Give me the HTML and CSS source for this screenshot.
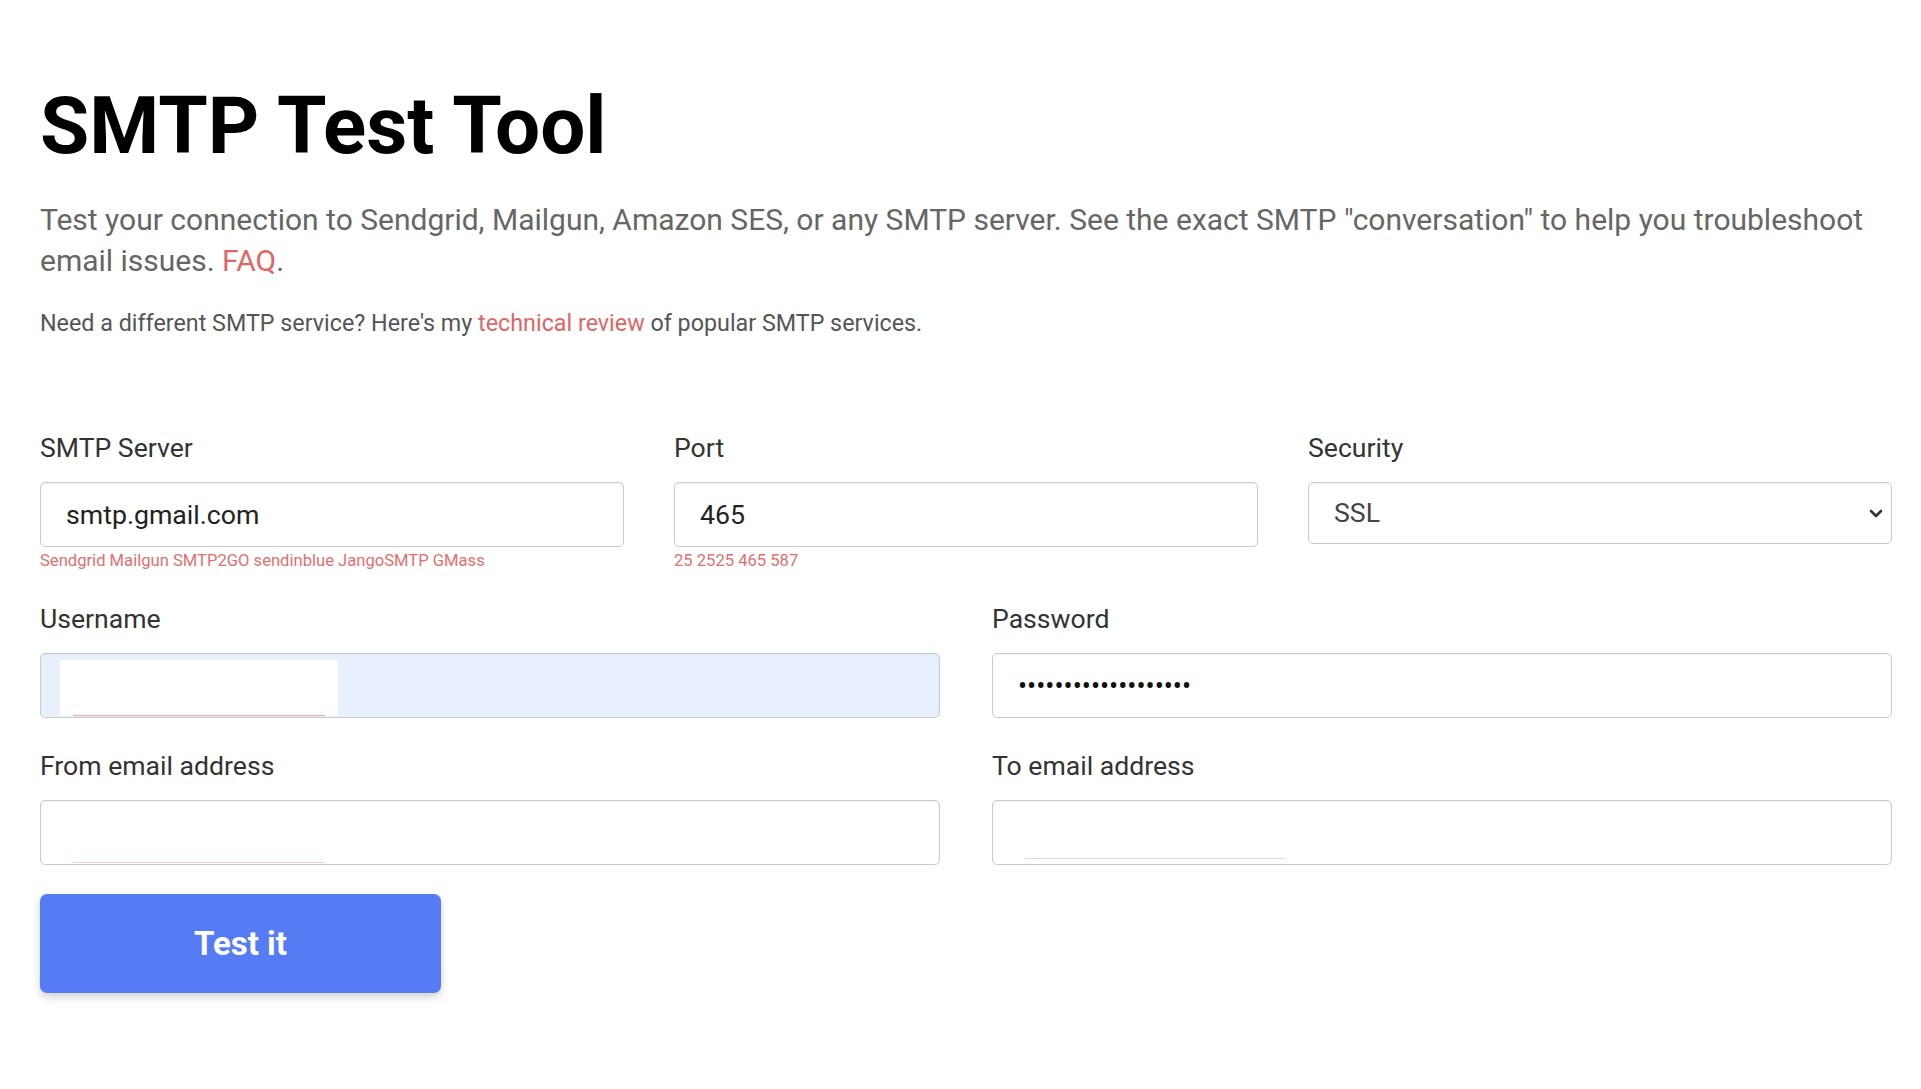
FILE: index.html
```html
<!DOCTYPE html>
<html lang="en">
<head>
<meta charset="utf-8">
<title>SMTP Test Tool</title>
<link rel="stylesheet" href="styles.css">
</head>
<body>
<main class="page">
  <h1 class="title">SMTP Test Tool</h1>
  <p class="lead">Test your connection to Sendgrid, Mailgun, Amazon SES, or any SMTP server. See the exact SMTP "conversation" to help you troubleshoot email issues. <a href="#" class="link">FAQ</a>.</p>
  <p class="note">Need a different SMTP service? Here's my <a href="#" class="link">technical review</a> of popular SMTP services.</p>

  <form class="form">
    <div class="row row-3">
      <div class="field">
        <label class="label">SMTP Server</label>
        <div class="control"><input class="input" type="text" value="smtp.gmail.com"></div>
        <div class="hint">Sendgrid Mailgun SMTP2GO sendinblue JangoSMTP GMass</div>
      </div>
      <div class="field">
        <label class="label">Port</label>
        <div class="control"><input class="input" type="text" value="465"></div>
        <div class="hint">25 2525 465 587</div>
      </div>
      <div class="field">
        <label class="label">Security</label>
        <div class="control">
          <select class="select"><option>SSL</option><option>TLS</option><option>None</option></select>
          <svg class="chevron" width="14" height="9" viewBox="0 0 14 9" aria-hidden="true"><path d="M2 2l5 5 5-5" fill="none" stroke="#333" stroke-width="2.6" stroke-linecap="round" stroke-linejoin="round"/></svg>
        </div>
      </div>
    </div>

    <div class="row row-2">
      <div class="field">
        <label class="label">Username</label>
        <div class="control">
          <input class="input input-autofill" type="text" value="">
          <span class="mask"></span>
          <span class="redact redact-user"></span>
        </div>
      </div>
      <div class="field">
        <label class="label">Password</label>
        <div class="control"><input class="input input-pass" type="password" value="abcdefghijklmnopqrs"></div>
      </div>
    </div>

    <div class="row row-2">
      <div class="field">
        <label class="label">From email address</label>
        <div class="control">
          <input class="input" type="text" value="">
          <span class="redact redact-from"></span>
        </div>
      </div>
      <div class="field">
        <label class="label">To email address</label>
        <div class="control">
          <input class="input" type="text" value="">
          <span class="redact redact-to"></span>
        </div>
      </div>
    </div>

    <button type="button" class="btn">Test it</button>
  </form>
</main>
</body>
</html>
```

FILE: styles.css
```css
html, body {
  margin: 0;
  padding: 0;
  background: #fff;
}

body {
  font-family: Roboto, "Liberation Sans", Arial, sans-serif;
  color: #333;
}

.page {
  width: 1852px;
  padding: 78px 0 60px 40px;
}

.title {
  margin: 0;
  font-size: 80px;
  line-height: 96px;
  font-weight: 700;
  color: #000;
}

.lead {
  margin: 25px 0 0;
  font-size: 30px;
  line-height: 41px;
  color: #666;
}

.note {
  margin: 26px 0 0;
  font-size: 23.3px;
  line-height: 33px;
  color: #555;
}

.link {
  color: #e06666;
  text-decoration: none;
}

.form {
  margin-top: 92px;
}

.row {
  display: grid;
  column-gap: 50px;
  margin-bottom: 32px;
}

.row-3 {
  grid-template-columns: repeat(3, 1fr);
}

.row-2 {
  grid-template-columns: repeat(2, 1fr);
  column-gap: 52px;
}

.label {
  display: block;
  font-size: 26.6px;
  line-height: 32px;
  color: #333;
  margin-bottom: 18px;
}

.control {
  position: relative;
}

.input,
.select {
  display: block;
  width: 100%;
  box-sizing: border-box;
  height: 65px;
  margin: 0;
  padding: 0 24px 0 25px;
  font-family: Roboto, "Liberation Sans", Arial, sans-serif;
  font-size: 26.7px;
  color: #222;
  background: #fff;
  border: 1px solid #cbcbcb;
  border-radius: 5px;
  box-shadow: inset 0 1px 2px rgba(0, 0, 0, 0.06);
  outline: none;
}

.select {
  height: 62px;
  padding-left: 25px;
  color: #444;
  -webkit-appearance: none;
  appearance: none;
}

.chevron {
  position: absolute;
  right: 9px;
  top: 27px;
  pointer-events: none;
}

.input-autofill {
  background: #e8f0fe;
}

.input-pass {
  font-size: 27px;
  letter-spacing: 0;
  color: #111;
}

.mask {
  position: absolute;
  left: 20px;
  top: 7px;
  width: 278px;
  height: 56px;
  background: #fff;
}

.redact {
  position: absolute;
  height: 1px;
}

.redact-user {
  left: 33px;
  top: 62px;
  width: 252px;
  background: #f4a9a9;
}

.redact-from {
  left: 33px;
  top: 62px;
  width: 252px;
  background: #f6cccc;
}

.redact-to {
  left: 33px;
  top: 58px;
  width: 260px;
  background: #f6d3d3;
}

.hint {
  margin-top: 4px;
  font-size: 16.6px;
  line-height: 20px;
  color: #e07070;
}

.btn {
  display: block;
  margin-top: -3px;
  width: 401px;
  height: 99px;
  border: 0;
  border-radius: 7px;
  background: #557cf5;
  color: #fff;
  font-family: Roboto, "Liberation Sans", Arial, sans-serif;
  font-size: 33px;
  font-weight: 700;
  box-shadow: 0 4px 8px rgba(0, 0, 0, 0.18);
  cursor: pointer;
}
```
